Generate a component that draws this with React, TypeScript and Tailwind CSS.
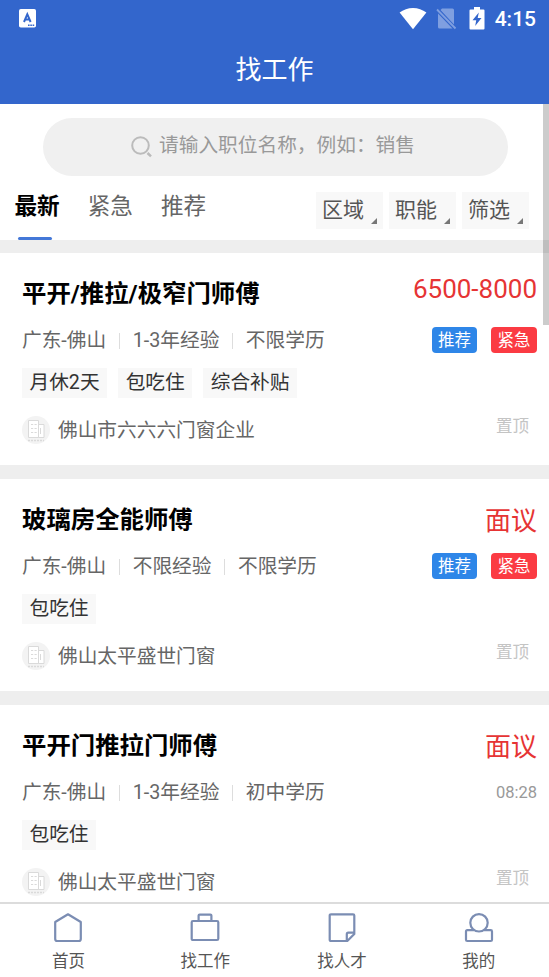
import { useState } from 'react'
import type { ReactNode } from 'react'

interface Job {
  title: string
  salary: string
  details: string[]
  tags: string[]
  company: string
  time?: string
}

const jobs: Job[] = [
  {
    title: '平开/推拉/极窄门师傅',
    salary: '6500-8000',
    details: ['广东-佛山', '1-3年经验', '不限学历'],
    tags: ['月休2天', '包吃住', '综合补贴'],
    company: '佛山市六六六门窗企业',
  },
  {
    title: '玻璃房全能师傅',
    salary: '面议',
    details: ['广东-佛山', '不限经验', '不限学历'],
    tags: ['包吃住'],
    company: '佛山太平盛世门窗',
  },
  {
    title: '平开门推拉门师傅',
    salary: '面议',
    details: ['广东-佛山', '1-3年经验', '初中学历'],
    tags: ['包吃住'],
    company: '佛山太平盛世门窗',
    time: '08:28',
  },
]

const tabs = ['最新', '紧急', '推荐']
const filters = ['区域', '职能', '筛选']

const StatusBar = () => (
  <div className="flex h-[37px] items-center justify-between pl-[19px] pr-[13px]">
    <svg width="17" height="19" viewBox="0 0 17 19">
      <rect width="17" height="18.5" rx="1.8" fill="#fff" />
      <path d="M5 13 8.300 5.200 11.600 13M6.200 10.400h4.200" fill="none" stroke="#36c" strokeWidth="2" />
      <path d="M9 16.200h6.500" stroke="#36c" strokeWidth="1.400" strokeDasharray="1.600 .700" />
    </svg>
    <div className="flex items-center">
      <svg width="28" height="23" viewBox="0 0 28 23">
        <path d="M.6 5.600C8-.7 20-.7 27.400 5.600L14 22.300Z" fill="#fff" />
      </svg>
      <svg className="ml-[9px]" width="21" height="23" viewBox="0 0 21 23">
        <path d="M6 1.500h10.500a1.500 1.500 0 0 1 1.500 1.500v14.500L4.500 3ZM2 6.500 16.500 21.500H3.500A1.500 1.500 0 0 1 2 20Z" fill="#7f9fe0" />
        <path d="m1 2.500 18.500 19" stroke="#7f9fe0" strokeWidth="1.800" />
      </svg>
      <svg className="ml-3" width="16" height="23" viewBox="0 0 16 23">
        <path d="M5 0h6v2.500h3.500q1 0 1 1V21.500q0 1-1 1h-13q-1 0-1-1V3.500q0-1 1-1H5Z" fill="#fff" />
        <path d="M9.800 5.500 3.500 13.300h3.700L6.200 19l6.300-8H8.700Z" fill="#36c" />
      </svg>
      <span className="ml-[10px] text-[21px] leading-6 font-medium">4:15</span>
    </div>
  </div>
)

const CompanyLogo = () => (
  <svg width="28" height="28" viewBox="0 0 28 28" className="mr-2 -mt-[3px] shrink-0">
    <circle cx="14" cy="14" r="14" fill="#f3f3f3" />
    <g fill="#fff" stroke="#dadada" strokeWidth="1">
      <path d="M6.500 4.500h10v17h-10ZM16.500 8.500H22v13h-5.500Z" />
      <path d="M9 8.500h2.200M12.500 8.500h2.200M9 12.500h2.200M12.500 12.500h2.200M9 16.500h2.200M12.500 16.500h2.200M18.500 12v6" />
      <path d="M6 24.500h16" strokeDasharray="2 1" strokeWidth="1.500" />
    </g>
  </svg>
)

const JobCard = ({ job }: { job: Job }) => (
  <article className="h-[212px] shrink-0 bg-white pt-[21px] pr-3 pl-[22px]">
    <div className="flex h-[38px] items-center justify-between">
      <h2 className="mt-[1px] text-[24.4px] leading-[38px] font-bold text-black">{job.title}</h2>
      <span className={`text-[26px] leading-[38px] text-[#e63434] ${job.salary === '面议' ? 'mt-1' : '-mt-2'}`}>
        {job.salary}
      </span>
    </div>
    <div className="mt-[15px] flex h-[28px] items-center text-[19.7px] text-[#666]">
      {job.details.map((detail, index) => (
        <span key={detail} className="flex items-center">
          {index > 0 && <i className="mr-[12.5px] ml-[13px] h-4 w-px bg-[#ddd]" />}
          {detail}
        </span>
      ))}
      <div className="-mt-[3px] ml-auto flex gap-[14px] text-[16.5px] leading-[24px] text-white">
        {job.time ? (
          <span className="pt-[2px] text-[#999]">{job.time}</span>
        ) : (
          <>
            <span className="w-[45px] rounded-[4px] bg-[#2e86e8] pt-[2px] text-center">推荐</span>
            <span className="w-[46px] rounded-[4px] bg-[#fb3b43] pt-[2px] text-center">紧急</span>
          </>
        )}
      </div>
    </div>
    <div className="mt-[13px] flex gap-[11px]">
      {job.tags.map((tag) => (
        <span key={tag} className="bg-[#f8f8f8] px-[7.5px] text-[19.7px] leading-[30px] text-[#333]">
          {tag}
        </span>
      ))}
    </div>
    <div className="mt-[18px] flex h-[30px] items-center text-[19.7px] text-[#666]">
      <CompanyLogo />
      {job.company}
      <span className="-mt-2 mr-2 ml-auto text-[16.5px] text-[#c4c4c4]">置顶</span>
    </div>
  </article>
)

const NavItem = ({ label, children }: { label: string; children: ReactNode }) => (
  <button type="button" className="flex flex-1 flex-col items-center pt-[9px] text-[16.5px] leading-6 text-[#555]">
    <svg width="30" height="32" viewBox="0 0 30 32" fill="none" stroke="#7b8db3" strokeWidth="2.200" strokeLinejoin="round">
      {children}
    </svg>
    <span className="mt-[5px]">{label}</span>
  </button>
)

export default function App() {
  const [activeTab, setActiveTab] = useState('最新')

  return (
    <div className="relative flex h-[977px] w-[549px] flex-col overflow-hidden bg-white font-['Roboto','Noto_Sans_CJK_SC',sans-serif]">
      <header className="h-[104px] shrink-0 bg-[#3366cc] text-white">
        <StatusBar />
        <h1 className="text-center text-[26px] leading-[66px]">找工作</h1>
      </header>

      <main className="flex min-h-0 flex-1 flex-col overflow-hidden">
        <div className="mt-[14px] ml-[43px] flex h-[58px] w-[465px] shrink-0 items-center justify-center rounded-full bg-[#f0f0f0] pr-[5px] text-[19.7px] text-[#999]">
          <svg width="22" height="22" viewBox="0 0 22 22" fill="none" stroke="#bbb" strokeWidth="2" className="mr-[6px] -mt-px">
            <circle cx="9.500" cy="9.500" r="8.300" />
            <path d="m16.500 17 3.500 3.300" strokeWidth="2.500" />
          </svg>
          <span className="-mt-[2px]">请输入职位名称，例如：销售</span>
        </div>

        <div className="flex h-[64px] shrink-0 items-stretch pl-[14.5px]">
          <div className="flex gap-7">
            {tabs.map((tab) => (
              <button
                key={tab}
                type="button"
                onClick={() => setActiveTab(tab)}
                className={`flex flex-col text-[22.6px] leading-[61px] ${activeTab === tab ? 'font-bold text-black' : 'text-[#666]'}`}
              >
                {tab}
                {activeTab === tab && <i className="ml-[3.5px] h-[3px] w-[34px] shrink-0 rounded-full bg-[#4478d8]" />}
              </button>
            ))}
          </div>
          <div className="mt-4 mr-5 ml-auto flex h-[37px] gap-[6px]">
            {filters.map((filter) => (
              <button
                key={filter}
                type="button"
                className="flex w-[67px] items-end justify-between bg-[#f8f8f8] px-[6px] text-[21px] leading-[37px] text-[#555]"
              >
                <span>{filter}</span>
                <svg width="6" height="6" viewBox="0 0 6 6" className="mb-[5px] shrink-0">
                  <path d="M6 0v6H0Z" fill="#777" />
                </svg>
              </button>
            ))}
          </div>
        </div>

        <div className="flex flex-col gap-[14px] bg-[#eee] pt-[13px]">
          {jobs.map((job) => (
            <JobCard key={job.title} job={job} />
          ))}
        </div>
      </main>

      <nav className="flex h-[75px] shrink-0 border-t-2 border-[#dcdcdc] bg-white pr-[2px]">
        <NavItem label="首页">
          <path d="M2.200 9 15 1.300 27.800 9v17q0 2-2 2H4.200q-2 0-2-2Z" />
        </NavItem>
        <NavItem label="找工作">
          <path d="M3 8h24q1.300 0 1.300 1.300v16.400q0 1.300-1.300 1.300H3q-1.300 0-1.300-1.300V9.300Q1.700 8 3 8ZM8.600 8V2.600q0-1 1-1h10.800q1 0 1 1V8" />
        </NavItem>
        <NavItem label="找人才">
          <path d="M4 1.300h22q1.300 0 1.300 1.300V21l-7 7H4q-1.300 0-1.300-1.300V2.600Q2.700 1.300 4 1.300ZM27.300 19.700h-6q-1.500 0-1.500 1.500V28" />
        </NavItem>
        <NavItem label="我的">
          <circle cx="15" cy="9.800" r="8.700" />
          <path d="M10 17.100H3.300q-1.300 0-1.300 1.300v8.300Q2 28 3.300 28h23.400q1.300 0 1.300-1.300v-8.300q0-1.300-1.300-1.300H20" />
        </NavItem>
      </nav>

      {/* Scroll thumb over the list */}
      <div className="absolute top-[104px] right-0 h-[221px] w-[6px] bg-black/20" />
    </div>
  )
}
